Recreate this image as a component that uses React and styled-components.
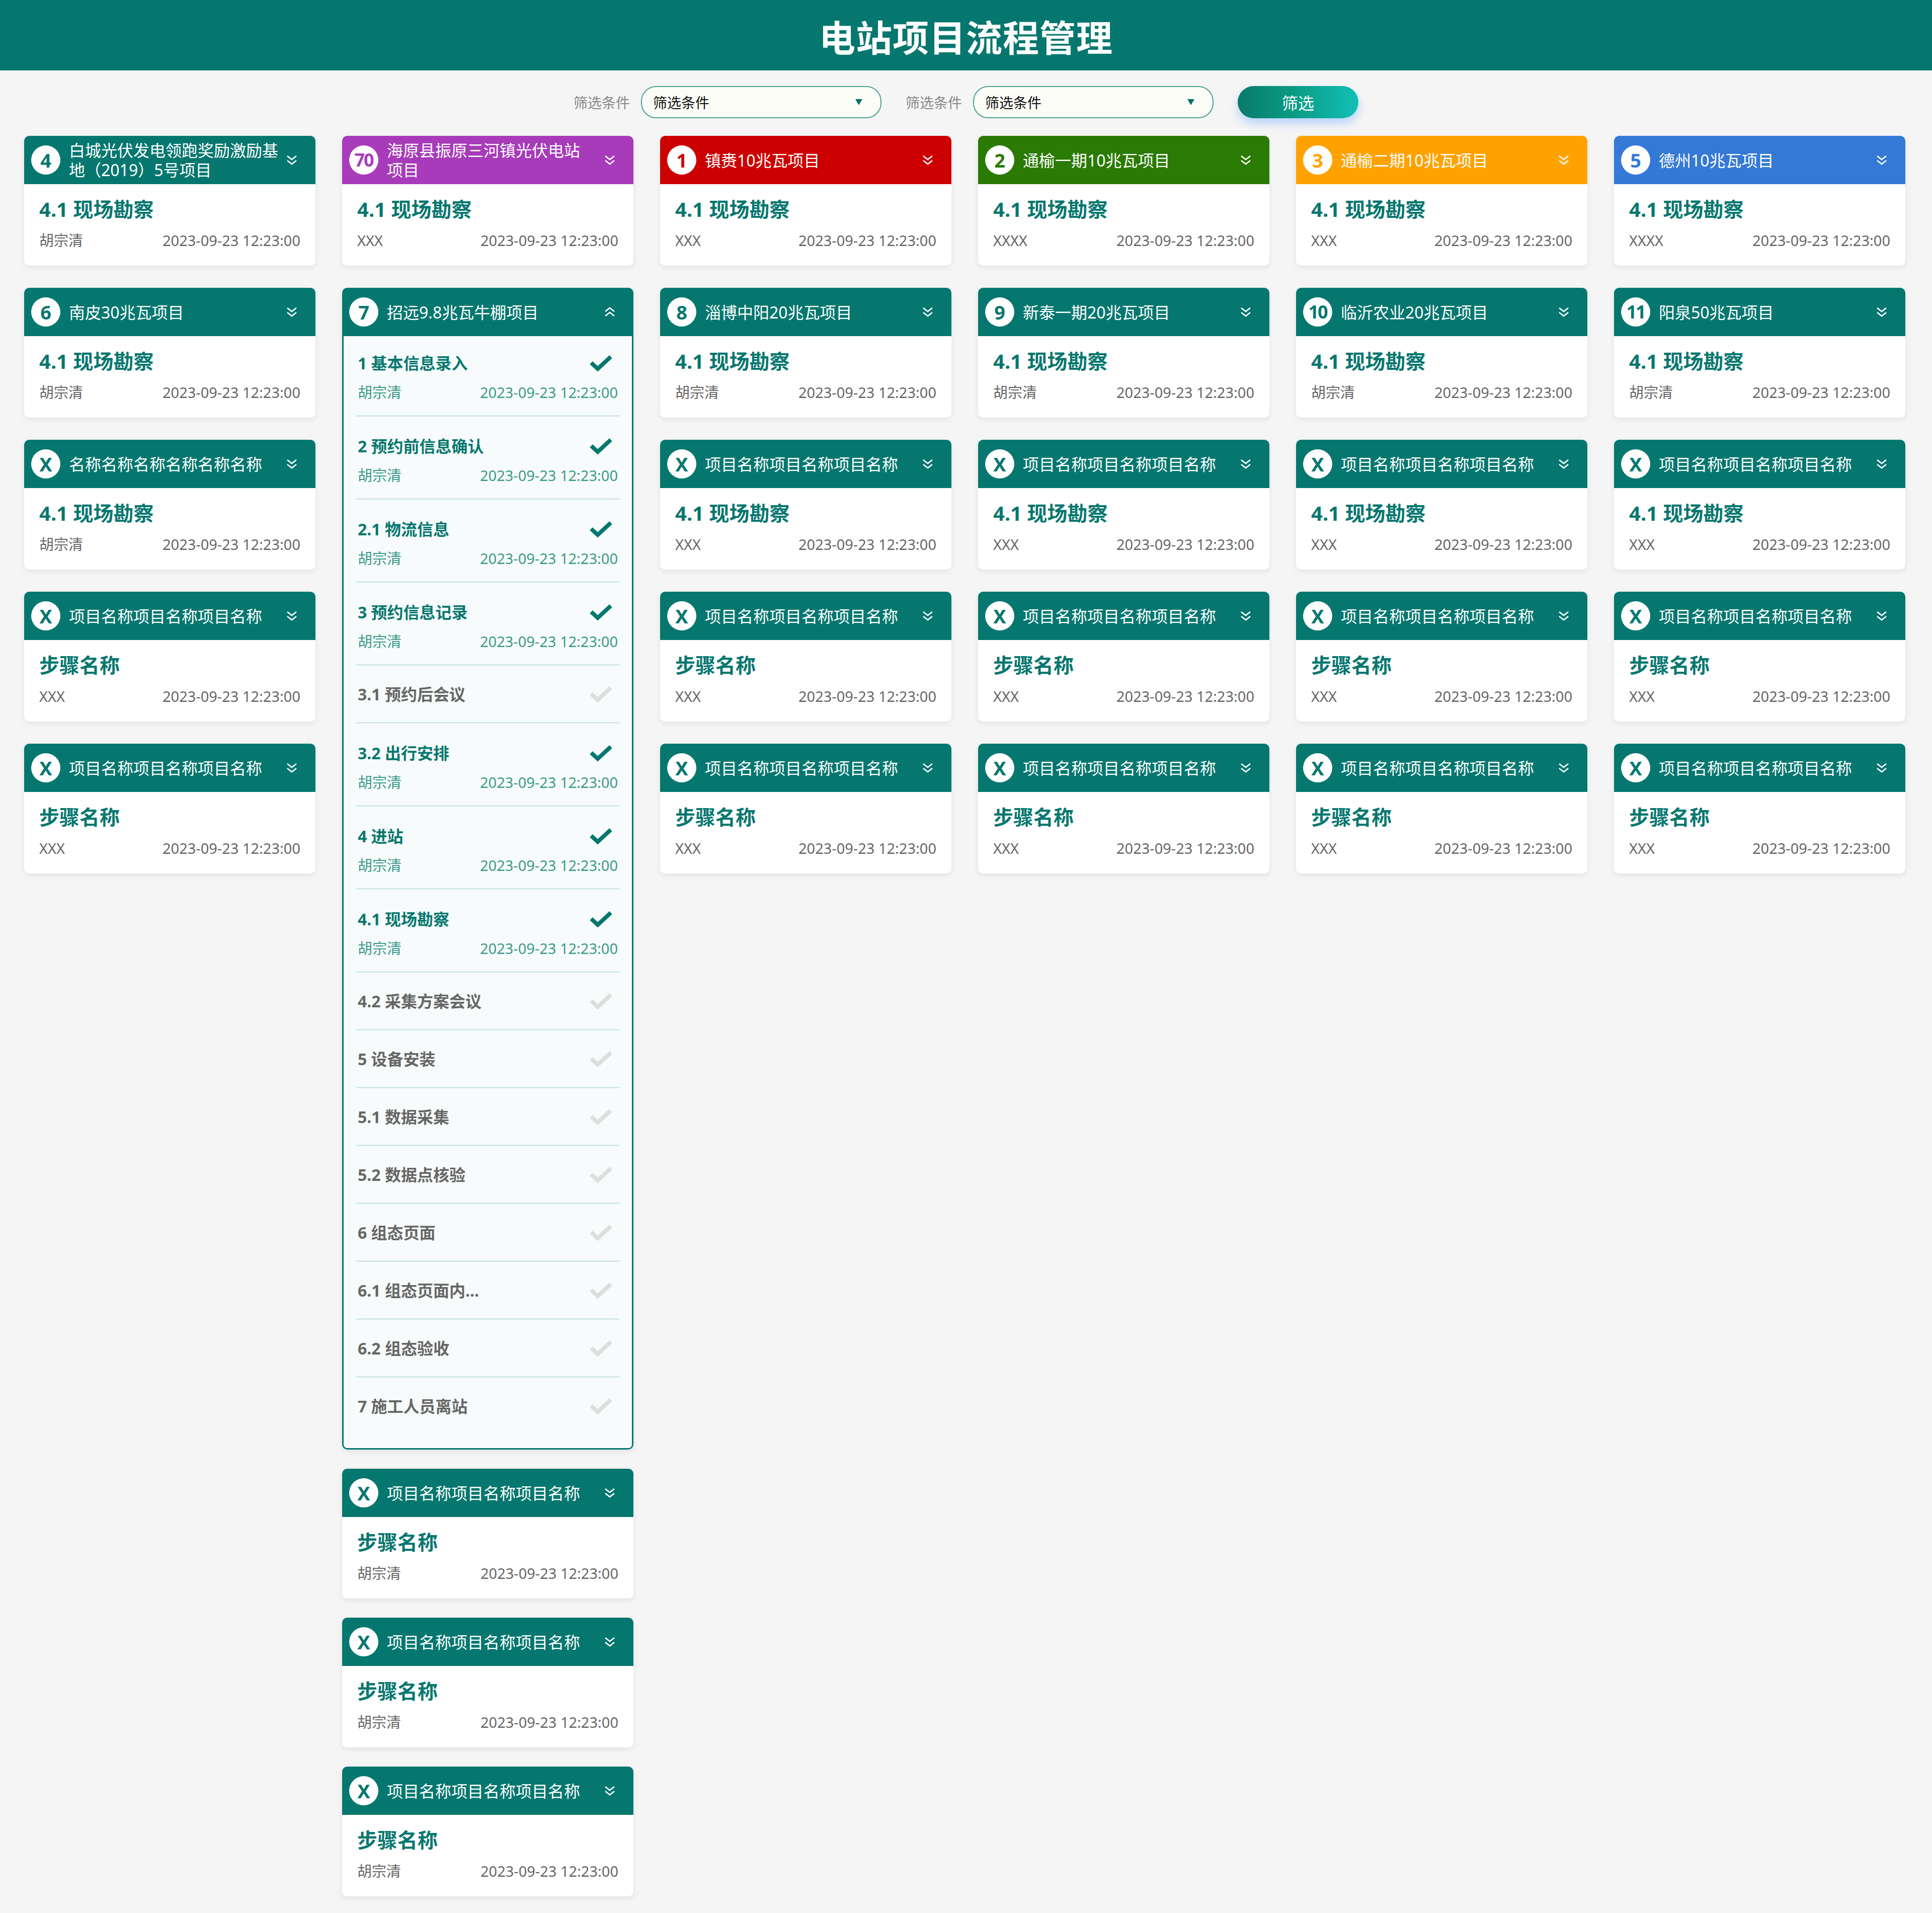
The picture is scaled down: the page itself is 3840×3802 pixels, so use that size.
import styled, { createGlobalStyle } from 'styled-components'

const TEAL = '#06776f'
const DATE = '2023-09-23 12:23:00'

const GlobalStyle = createGlobalStyle`
    body {
        margin: 0;
        background: #f5f5f5;
        font-family: "Noto Sans", "Noto Sans CJK SC", sans-serif;
    }
`

const Page = styled.div`
    min-height: 100vh;
    background: #f5f5f5;
`
const TopBar = styled.header`
    height: 140px;
    background: ${TEAL};
    display: flex;
    align-items: center;
    justify-content: center;
`
const PageTitle = styled.h1`
    margin: 0;
    color: #fff;
    font-size: 72px;
    font-weight: 700;
    letter-spacing: 1px;
`
const FilterBar = styled.div`
    margin-top: 31px;
    height: 64px;
    display: flex;
    justify-content: center;
    align-items: center;
    gap: 48px;
`
const Field = styled.label`
    display: flex;
    align-items: center;
    gap: 22px;
    font-size: 28px;
    color: #888;
`
const SelectBox = styled.div`
    box-sizing: border-box;
    width: 478px;
    height: 64px;
    padding: 0 36px 0 22px;
    border: 2px solid #4aa290;
    border-radius: 30px;
    background: #fdfdf8;
    display: flex;
    align-items: center;
    justify-content: space-between;
    color: #111;
    font-size: 28px;
`
const Caret = styled.span`
    width: 0;
    height: 0;
    border-left: 7px solid transparent;
    border-right: 7px solid transparent;
    border-top: 12px solid #0a6e66;
`
const FilterButton = styled.button`
    width: 240px;
    height: 64px;
    border: none;
    border-radius: 32px;
    background: linear-gradient(90deg, #087a6c 0%, #0a9a82 45%, #12c0b8 100%);
    color: #fff;
    font-family: inherit;
    font-size: 32px;
    box-shadow: 0 10px 18px rgba(70, 150, 255, 0.35);
`
const Board = styled.main`
    display: grid;
    grid-template-columns: repeat(6, 1fr);
    column-gap: 53px;
    align-items: start;
    padding: 35px 53px 40px 48px;
`
// columns stack on their own, so an opened card only pushes its own column down
const Column = styled.div`
    display: flex;
    flex-direction: column;
    gap: 44px;
    & > :nth-child(n + 3) {
        margin-top: ${p => (p.$tight ? '-6px' : '0')};
    }
`
const Card = styled.div`
    background: #fff;
    border-radius: 10px;
    overflow: hidden;
    box-shadow: 0 4px 12px rgba(0, 0, 0, 0.08);
`
const CardHead = styled.div`
    box-sizing: border-box;
    height: 96px;
    padding: 0 35px 0 14px;
    background: ${p => p.$color};
    color: #fff;
    display: flex;
    align-items: center;
`
const Badge = styled.span`
    flex: none;
    width: 58px;
    height: 58px;
    margin-right: 17px;
    border-radius: 50%;
    background: #fff;
    color: ${p => p.$color};
    font-size: ${p => (p.$wide ? '36px' : '38px')};
    font-weight: 700;
    line-height: 58px;
    text-align: center;
    letter-spacing: ${p => (p.$wide ? '-2px' : '0')};
`
const HeadTitle = styled.div`
    flex: 1;
    min-width: 0;
    font-size: 32px;
    line-height: 39px;
    white-space: pre-line;
`
const Chevron = styled.svg`
    flex: none;
    width: 24px;
    height: 22px;
    margin-left: 10px;
`
const CardBody = styled.div`
    padding: 26px 30px;
`
const StepName = styled.div`
    color: ${TEAL};
    font-size: 40px;
    font-weight: 700;
    line-height: 48px;
`
const Meta = styled.div`
    margin-top: ${p => (p.$tight ? '18px' : '14px')};
    display: flex;
    justify-content: space-between;
    font-size: 29px;
    line-height: ${p => (p.$tight ? '36px' : '48px')};
    color: ${p => p.$color || '#666'};
`
const StepList = styled.div`
    background: #f7fbfb;
    border: 3px solid ${TEAL};
    border-top: none;
    border-radius: 0 0 10px 10px;
    padding: 0 25px 28px;
`
const StepItem = styled.div`
    padding: ${p => (p.$done ? '37px 3px 27px' : '35px 3px 33px')};
    border-bottom: 3px solid #d5e9e6;
    &:first-child {
        padding-top: 32px;
    }
    &:last-child {
        border-bottom: none;
    }
`
const StepTop = styled.div`
    display: flex;
    justify-content: space-between;
    align-items: center;
`
const StepTitle = styled.span`
    font-size: 32px;
    font-weight: 700;
    line-height: 44px;
    color: ${p => (p.$done ? TEAL : '#666')};
`
const Check = styled.svg`
    width: 46px;
    height: 34px;
    margin-right: 10px;
`

const colors = {
    teal: TEAL,
    purple: '#a73bb9',
    red: '#cc0000',
    green: '#2a7a03',
    orange: '#ffa200',
    blue: '#3479d5',
}

const x = (step, who) => ({ no: 'X', name: '项目名称项目名称项目名称', step, who })

const columns = [
    [
        { no: '4', name: '白城光伏发电领跑奖励激励基地（2019）5号项目', step: '4.1 现场勘察', who: '胡宗清' },
        { no: '6', name: '南皮30兆瓦项目', step: '4.1 现场勘察', who: '胡宗清' },
        { no: 'X', name: '名称名称名称名称名称名称', step: '4.1 现场勘察', who: '胡宗清' },
        x('步骤名称', 'XXX'),
        x('步骤名称', 'XXX'),
    ],
    [
        { no: '70', name: '海原县振原三河镇光伏电站\n项目', color: 'purple', step: '4.1 现场勘察', who: 'XXX' },
        { no: '7', name: '招远9.8兆瓦牛棚项目', open: true },
        x('步骤名称', '胡宗清'),
        x('步骤名称', '胡宗清'),
        x('步骤名称', '胡宗清'),
    ],
    [
        { no: '1', name: '镇赉10兆瓦项目', color: 'red', step: '4.1 现场勘察', who: 'XXX' },
        { no: '8', name: '淄博中阳20兆瓦项目', step: '4.1 现场勘察', who: '胡宗清' },
        x('4.1 现场勘察', 'XXX'),
        x('步骤名称', 'XXX'),
        x('步骤名称', 'XXX'),
    ],
    [
        { no: '2', name: '通榆一期10兆瓦项目', color: 'green', step: '4.1 现场勘察', who: 'XXXX' },
        { no: '9', name: '新泰一期20兆瓦项目', step: '4.1 现场勘察', who: '胡宗清' },
        x('4.1 现场勘察', 'XXX'),
        x('步骤名称', 'XXX'),
        x('步骤名称', 'XXX'),
    ],
    [
        { no: '3', name: '通榆二期10兆瓦项目', color: 'orange', step: '4.1 现场勘察', who: 'XXX' },
        { no: '10', name: '临沂农业20兆瓦项目', step: '4.1 现场勘察', who: '胡宗清' },
        x('4.1 现场勘察', 'XXX'),
        x('步骤名称', 'XXX'),
        x('步骤名称', 'XXX'),
    ],
    [
        { no: '5', name: '德州10兆瓦项目', color: 'blue', step: '4.1 现场勘察', who: 'XXXX' },
        { no: '11', name: '阳泉50兆瓦项目', step: '4.1 现场勘察', who: '胡宗清' },
        x('4.1 现场勘察', 'XXX'),
        x('步骤名称', 'XXX'),
        x('步骤名称', 'XXX'),
    ],
]

const steps = [
    ['1 基本信息录入', true],
    ['2 预约前信息确认', true],
    ['2.1 物流信息', true],
    ['3 预约信息记录', true],
    ['3.1 预约后会议', false],
    ['3.2 出行安排', true],
    ['4 进站', true],
    ['4.1 现场勘察', true],
    ['4.2 采集方案会议', false],
    ['5 设备安装', false],
    ['5.1 数据采集', false],
    ['5.2 数据点核验', false],
    ['6 组态页面', false],
    ['6.1 组态页面内...', false],
    ['6.2 组态验收', false],
    ['7 施工人员离站', false],
]

const Chevrons = ({ up }) => (
    <Chevron viewBox="0 0 24 22" fill="none" stroke="#fff" strokeWidth="2.6">
        {up ? (
            <>
                <path d="M3 10 L12 3 L21 10" />
                <path d="M3 19 L12 12 L21 19" />
            </>
        ) : (
            <>
                <path d="M3 3 L12 10 L21 3" />
                <path d="M3 12 L12 19 L21 12" />
            </>
        )}
    </Chevron>
)

const CheckMark = ({ done }) => (
    <Check viewBox="0 0 46 34" fill="none" stroke={done ? TEAL : '#dedede'} strokeWidth="8">
        <path d="M3 16 L16 28 L42 4" />
    </Check>
)

const ProjectCard = ({ item }) => {
    const color = colors[item.color || 'teal']
    return (
        <Card>
            <CardHead $color={color}>
                <Badge $color={color} $wide={item.no.length > 1}>{item.no}</Badge>
                <HeadTitle>{item.name}</HeadTitle>
                <Chevrons up={item.open} />
            </CardHead>
            {item.open ? (
                <StepList>
                    {steps.map(([title, done]) => (
                        <StepItem key={title} $done={done}>
                            <StepTop>
                                <StepTitle $done={done}>{title}</StepTitle>
                                <CheckMark done={done} />
                            </StepTop>
                            {done && (
                                <Meta $tight $color="#3a9a89">
                                    <span>胡宗清</span>
                                    <span>{DATE}</span>
                                </Meta>
                            )}
                        </StepItem>
                    ))}
                </StepList>
            ) : (
                <CardBody>
                    <StepName>{item.step}</StepName>
                    <Meta>
                        <span>{item.who}</span>
                        <span>{DATE}</span>
                    </Meta>
                </CardBody>
            )}
        </Card>
    )
}

const App = () => {
    return (
        <Page>
            <GlobalStyle />
            <TopBar>
                <PageTitle>电站项目流程管理</PageTitle>
            </TopBar>
            <FilterBar>
                <Field>
                    筛选条件
                    <SelectBox><span>筛选条件</span><Caret /></SelectBox>
                </Field>
                <Field>
                    筛选条件
                    <SelectBox><span>筛选条件</span><Caret /></SelectBox>
                </Field>
                <FilterButton>筛选</FilterButton>
            </FilterBar>
            <Board>
                {columns.map((col, i) => (
                    <Column key={i} $tight={col.some(c => c.open)}>
                        {col.map((item, j) => <ProjectCard key={j} item={item} />)}
                    </Column>
                ))}
            </Board>
        </Page>
    )
}

export default App
